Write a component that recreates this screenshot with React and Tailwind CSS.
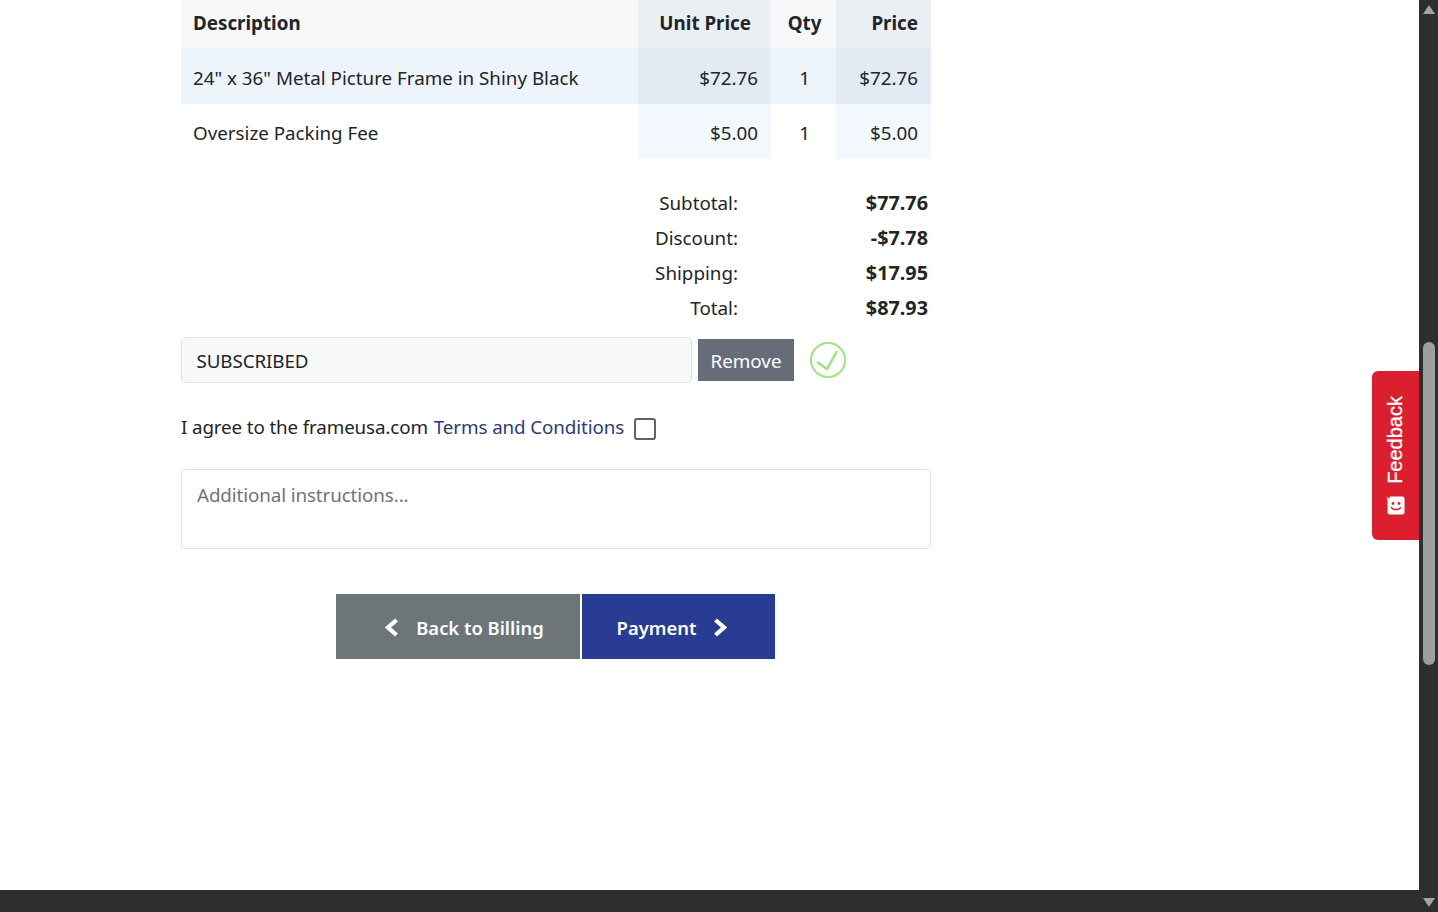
import React from 'react';

const ROWS = [
  { description: '24" x 36" Metal Picture Frame in Shiny Black', unit: '$72.76', qty: 1, price: '$72.76', striped: true },
  { description: 'Oversize Packing Fee', unit: '$5.00', qty: 1, price: '$5.00', striped: false },
];

const TOTALS = [
  { label: 'Subtotal:', value: '$77.76' },
  { label: 'Discount:', value: '-$7.78' },
  { label: 'Shipping:', value: '$17.95' },
  { label: 'Total:', value: '$87.93' },
];

const FONT = "font-['Noto_Sans',sans-serif]";

const OrderTable = () => (
  <table className="w-[750px] table-fixed border-collapse text-[18.8px] text-[#212529]">
    <colgroup>
      <col className="w-[457px]" />
      <col className="w-[133px]" />
      <col className="w-[65px]" />
      <col className="w-[95px]" />
    </colgroup>
    <thead>
      <tr className="h-[48px]">
        <th className="bg-[#f7f8f9] pb-[2px] pl-3 text-left font-bold">Description</th>
        <th className="bg-[#ebeff3] pb-[2px] pr-5 text-right font-bold">Unit Price</th>
        <th className="bg-[#f7f8f9] pb-[2px] pl-[2px] text-center font-bold">Qty</th>
        <th className="bg-[#ebeff3] pb-[2px] pr-[13px] text-right font-bold">Price</th>
      </tr>
    </thead>
    <tbody>
      {ROWS.map((row) => (
        <tr key={row.description} className="h-[55.5px]">
          <td className={`pl-3 pt-[4px] ${row.striped ? 'bg-[#edf4fb]' : 'bg-white'}`}>{row.description}</td>
          <td className={`pr-[13px] pt-[4px] text-right ${row.striped ? 'bg-[#e3ecf5]' : 'bg-[#f2f8fd]'}`}>{row.unit}</td>
          <td className={`pl-[2px] pt-[4px] text-center ${row.striped ? 'bg-[#edf4fb]' : 'bg-white'}`}>{row.qty}</td>
          <td className={`pr-[13px] pt-[4px] text-right ${row.striped ? 'bg-[#e3ecf5]' : 'bg-[#f2f8fd]'}`}>{row.price}</td>
        </tr>
      ))}
    </tbody>
  </table>
);

const Totals = () => (
  <div className="mt-[27px] flex w-[750px] flex-col text-[18.8px] text-[#212529]">
    {TOTALS.map((t) => (
      <div key={t.label} className="flex h-[35px] items-center">
        <span className="w-[557px] text-right">{t.label}</span>
        <span className="w-[190px] pb-[2px] text-right text-[19.8px] font-bold">{t.value}</span>
      </div>
    ))}
  </div>
);

const Coupon = () => (
  <div className="mt-[11px] flex items-center">
    <div className="flex h-[46px] w-[511px] items-center rounded-[4px] border border-[#dee2e6] bg-[#f8f9fa] pl-[14.5px] pt-[2px] text-[18.8px] tracking-[-0.1px] text-[#212529]">
      SUBSCRIBED
    </div>
    <button className="ml-[6px] h-[42px] w-[96px] bg-[#666d79] pt-[2px] text-[18.8px] text-white">Remove</button>
    <svg width="36" height="36" viewBox="0 0 36 36" fill="none" className="ml-[16px]">
      <circle cx="18" cy="18" r="17" stroke="#9be67d" strokeWidth="2" />
      <path d="M7 20L17 27L27 9" stroke="#9be67d" strokeWidth="2.5" strokeLinejoin="round" />
    </svg>
  </div>
);

const Agree = () => (
  <div className="mt-[32px] flex h-[26px] items-center text-[18.8px] text-[#212529]">
    <span className="pb-[1px] tracking-[-0.13px]">I agree to the frameusa.com</span>
    <a className="ml-[6px] pb-[1px] tracking-[-0.1px] text-[#2a3b80]">Terms and Conditions</a>
    <span className="ml-[10px] mt-[2px] h-[22px] w-[22px] rounded-[3px] border-[2.5px] border-[#5f6468] bg-white" />
  </div>
);

const Chevron = ({ d }) => (
  <svg width="13" height="19" viewBox="0 0 13 19" fill="none">
    <path d={d} stroke="#fff" strokeWidth="4.2" />
  </svg>
);

const Actions = () => (
  <div className="mt-[45px] ml-[155px] flex text-[18.4px] font-semibold text-white">
    <button className="flex h-[65px] w-[244px] items-center justify-center gap-[18px] bg-[#6c7679] pl-[13px] pt-[2px]">
      <Chevron d="M11.5 2L3 9.5l8.5 7.5" />
      Back to Billing
    </button>
    <button className="ml-[2px] flex h-[65px] w-[193px] items-center justify-center gap-[18px] bg-[#273c92] pr-[13px] pt-[2px]">
      Payment
      <Chevron d="M1.5 2L10 9.5 1.5 17" />
    </button>
  </div>
);

const FeedbackTab = () => (
  <div className="absolute right-0 top-[371px] flex h-[169px] w-[47.5px] flex-col items-center justify-center gap-[12px] rounded-l-[6px] bg-[#dc1f2e] text-white">
    <span className="rotate-180 font-['Liberation_Sans',sans-serif] text-[20px] [-webkit-text-stroke:0.3px_white] [writing-mode:vertical-rl]">Feedback</span>
    <svg width="19" height="19" viewBox="0 0 19 19">
      <path d="M0.5 0.5L3.5 3V1.5A1 1 0 0 1 4.5 0.5H16.5A2 2 0 0 1 18.5 2.5V16.5A2 2 0 0 1 16.5 18.5H3.5A2 2 0 0 1 1.5 16.5V4.5z" fill="#fff" />
      <circle cx="7" cy="7.5" r="1.4" fill="#dc1f2e" />
      <circle cx="13" cy="7.5" r="1.4" fill="#dc1f2e" />
      <path d="M5.5 11.5c1.2 2.8 7.8 2.8 9 0" stroke="#dc1f2e" strokeWidth="1.5" fill="none" strokeLinecap="round" />
    </svg>
  </div>
);

const VerticalScrollbar = () => (
  <div className="flex w-[19px] flex-col items-center bg-[#2e2e2e] pt-[5px] pb-[5px]">
    <div className="h-0 w-0 border-x-[6px] border-b-[9px] border-x-transparent border-b-[#a3a3a3]" />
    <div className="mt-[328px] h-[323px] w-[12px] rounded-full bg-[#9f9f9f]" />
    <div className="flex-1" />
    <div className="h-0 w-0 border-x-[6px] border-t-[9px] border-x-transparent border-t-[#a3a3a3]" />
  </div>
);

export default function App() {
  return (
    <div className={`relative flex h-[912px] w-[1438px] overflow-hidden bg-white ${FONT}`}>
      <div className="flex flex-1 flex-col">
        <main className="relative flex-1 pl-[181px]">
          <OrderTable />
          <Totals />
          <Coupon />
          <Agree />
          <div className="mt-[28px] h-[80px] w-[750px] rounded-[4px] border border-[#dee2e6] px-[15px] pt-[11px] text-[18.8px] tracking-[-0.1px] text-[#6c757d]">
            Additional instructions...
          </div>
          <Actions />
          <FeedbackTab />
        </main>
        <div className="h-[22px] bg-[#2e2e2e]" />
      </div>
      <VerticalScrollbar />
    </div>
  );
}
